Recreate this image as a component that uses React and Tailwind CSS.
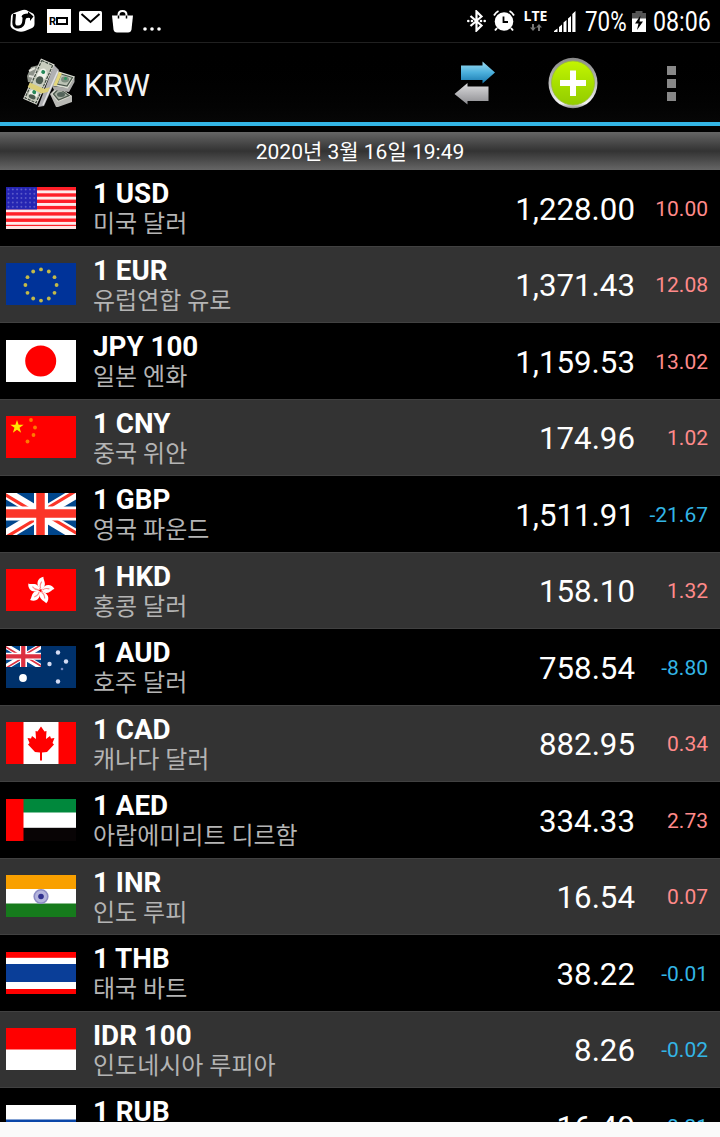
import React from 'react'
import clsx from 'clsx'

const STAR = 'M0 -1 L.23 -.31 L.95 -.31 L.36 .12 L.59 .81 L0 .38 L-.59 .81 L-.36 .12 L-.95 -.31 L-.23 -.31 Z'

function Star({ x, y, r, fill, rotate = 0 }) {
  return <path d={STAR} fill={fill} transform={`translate(${x} ${y}) rotate(${rotate}) scale(${r})`} />
}

function UnionJack({ red = '#fb3528' }) {
  return (
    <>
      <rect width="70" height="42" fill="#00468c" />
      <path d="M0 0 L70 42 M70 0 L0 42" stroke="#fff" strokeWidth="11" />
      <path d="M-1 1.5 L29 19.5 M71 40.5 L41 22.5 M69 -1.5 L39 16.5 M1 43.5 L31 25.5" stroke={red} strokeWidth="3.2" />
      <path d="M35 0 V42 M0 20.5 H70" stroke="#fff" strokeWidth="14" />
      <path d="M34.500 0 V42 M0 20.5 H70" stroke={red} strokeWidth="8.5" />
    </>
  )
}

const flags = {
  USD: (
    <>
      <rect width="70" height="42" fill="#ffeaea" />
      {[0, 1, 2, 3, 4, 5, 6].map((i) => (
        <rect key={i} y={i * 6.3} width="70" height="3.4" fill="#ff1f28" />
      ))}
      <rect y="39" width="70" height="3" fill="#ffe4e4" />
      <rect width="31" height="22.5" fill="#2525b2" />
      {Array.from({ length: 35 }, (_, i) => (
        <circle key={i} cx={2.5 + (i % 7) * 4.3} cy={2.5 + Math.floor(i / 7) * 4.3} r="1" fill="#5a5ac8" />
      ))}
    </>
  ),
  EUR: (
    <>
      <rect width="70" height="42" fill="#003399" />
      {Array.from({ length: 12 }, (_, i) => (
        <circle
          key={i}
          cx={35 + 15.6 * Math.sin((i * Math.PI) / 6)}
          cy={22 - 15.6 * Math.cos((i * Math.PI) / 6)}
          r="1.9"
          fill="#c4ba48"
        />
      ))}
    </>
  ),
  JPY: (
    <>
      <rect width="70" height="42" fill="#fff" />
      <circle cx="34.7" cy="21" r="15.5" fill="#f00" />
    </>
  ),
  CNY: (
    <>
      <rect width="70" height="42" fill="#f00" />
      <Star x={11} y={11} r={7} fill="#ffe600" />
      <circle cx="25" cy="4" r="1.9" fill="#ff7a00" />
      <circle cx="29" cy="11.500" r="1.9" fill="#ff7a00" />
      <circle cx="27.500" cy="19" r="1.9" fill="#ff7a00" />
      <circle cx="21.500" cy="25.500" r="1.9" fill="#ff7a00" />
    </>
  ),
  GBP: <UnionJack />,
  HKD: (
    <>
      <rect width="70" height="42" fill="#f00" />
      {[8, 80, 152, 224, 296].map((a) => (
        <g key={a} transform={`translate(34.5 21.5) rotate(${a})`}>
          <path d="M0 -1 C-6 -5 -5 -12 1 -14 C1 -11 5 -8 3 -4 C2 -2 1 -1 0 -1 Z" fill="#fff" />
          <path d="M0 -2 C-2 -5 -1 -7 0 -9" stroke="#ff8c8c" strokeWidth="1.2" fill="none" />
        </g>
      ))}
    </>
  ),
  AUD: (
    <>
      <rect width="70" height="42" fill="#00316b" />
      <svg width="35" height="21" viewBox="0 0 70 42" preserveAspectRatio="none">
        <UnionJack red="#dc3040" />
      </svg>
      <circle cx="17" cy="32" r="3.9" fill="#fff" />
      <circle cx="52" cy="6.500" r="2.200" fill="#d4dcf4" />
      <circle cx="43.500" cy="18" r="2.200" fill="#d4dcf4" />
      <circle cx="60" cy="15.500" r="2.200" fill="#d4dcf4" />
      <circle cx="56" cy="23" r="1.300" fill="#7688c0" />
      <circle cx="52" cy="35.500" r="2.200" fill="#d4dcf4" />
    </>
  ),
  CAD: (
    <>
      <rect width="70" height="42" fill="#fff" />
      <rect width="17.5" height="42" fill="#f00" />
      <rect x="52.5" width="17.5" height="42" fill="#f00" />
      <path
        d="M35 4.500 L38.500 9.500 L40.500 9 L40 17 L44 14 L45 16.500 L48.500 16 L46.500 21 L48 22.500 L41 30 L36 30.500 V38.500 H34 V30.500 L29 30 L22 22.500 L23.500 21 L21.500 16 L25 16.500 L26 14 L30 17 L29.500 9 L31.500 9.500 Z"
        fill="#f00"
      />
    </>
  ),
  AED: (
    <>
      <rect width="70" height="42" fill="#fff" />
      <rect width="70" height="13.5" fill="#00883c" />
      <rect y="28.8" width="70" height="13.2" fill="#080405" />
      <rect width="17.5" height="42" fill="#f00" />
    </>
  ),
  INR: (
    <>
      <rect width="70" height="42" fill="#fff" />
      <rect width="70" height="14" fill="#f9a000" />
      <rect y="28.5" width="70" height="13.5" fill="#167a1c" />
      <circle cx="35" cy="21.5" r="6.8" fill="#b4b4dc" stroke="#8c8cc4" strokeWidth="1.6" />
      <circle cx="35" cy="21.5" r="2.8" fill="#30308e" />
    </>
  ),
  THB: (
    <>
      <rect width="70" height="42" fill="#fff" />
      <rect width="70" height="5.8" fill="#f00" />
      <rect y="12" width="70" height="18" fill="#0a3e98" />
      <rect y="37" width="70" height="5" fill="#f00" />
    </>
  ),
  IDR: (
    <>
      <rect width="70" height="42" fill="#fff" />
      <rect width="70" height="21.5" fill="#f00" />
    </>
  ),
  RUB: (
    <>
      <rect width="70" height="42" fill="#fff" />
      <rect y="14.5" width="70" height="14" fill="#0a47a8" />
      <rect y="28.5" width="70" height="13.5" fill="#f00" />
    </>
  ),
}

const rates = [
  { code: 'USD', label: '1 USD', name: '미국 달러', value: '1,228.00', diff: '10.00' },
  { code: 'EUR', label: '1 EUR', name: '유럽연합 유로', value: '1,371.43', diff: '12.08' },
  { code: 'JPY', label: 'JPY 100', name: '일본 엔화', value: '1,159.53', diff: '13.02' },
  { code: 'CNY', label: '1 CNY', name: '중국 위안', value: '174.96', diff: '1.02' },
  { code: 'GBP', label: '1 GBP', name: '영국 파운드', value: '1,511.91', diff: '-21.67' },
  { code: 'HKD', label: '1 HKD', name: '홍콩 달러', value: '158.10', diff: '1.32' },
  { code: 'AUD', label: '1 AUD', name: '호주 달러', value: '758.54', diff: '-8.80' },
  { code: 'CAD', label: '1 CAD', name: '캐나다 달러', value: '882.95', diff: '0.34' },
  { code: 'AED', label: '1 AED', name: '아랍에미리트 디르함', value: '334.33', diff: '2.73' },
  { code: 'INR', label: '1 INR', name: '인도 루피', value: '16.54', diff: '0.07' },
  { code: 'THB', label: '1 THB', name: '태국 바트', value: '38.22', diff: '-0.01' },
  { code: 'IDR', label: 'IDR 100', name: '인도네시아 루피아', value: '8.26', diff: '-0.02' },
  { code: 'RUB', label: '1 RUB', value: '16.49', diff: '-0.21' },
]

function StatusBar() {
  return (
    <div className="flex h-[42px] shrink-0 items-center justify-between bg-black px-[9px] text-white">
      <div className="flex h-full items-center">
        {/* U+ logo */}
        <svg className="mr-3 h-6 w-[26px]" viewBox="0 0 26 24">
          <path d="M5 4 L12 1.5 Q16 0 19 2 L24 4.5 Q26 6 25.5 10 V15 Q25.5 18 22 19.5 L16 22 Q12 23.5 8 22 L4 20 Q1 18 1.5 15 L2 7 Q2 5 5 4 Z" fill="#fff" />
          <path d="M5.500 5 L4.800 13 Q4.500 18.500 9.500 18 Q14.500 17.500 14.800 12 L15.300 6" fill="none" stroke="#000" strokeWidth="3" />
          <path d="M12.500 7.500 Q13.500 4.500 19 4.500 V2.500 L24.500 7.500 L21 12 V9 Q17 8 16 11 Z" fill="#000" />
        </svg>
        <div className="mr-2 flex h-6 w-6 items-center bg-white pl-[2px]">
          <span className="font-[Roboto,sans-serif] text-[11px] leading-none font-bold text-black">R</span>
          <span className="h-2 w-3 shrink-0 border-2 border-black" />
        </div>
        <svg className="mr-[10px] h-5 w-[23px]" viewBox="0 0 23 20">
          <rect width="23" height="20" rx="1.5" fill="#fff" />
          <path d="M2.5 3 L11.5 11 L20.5 3" fill="none" stroke="#000" strokeWidth="2" />
        </svg>
        <svg className="mr-[10px] h-[23px] w-[21px]" viewBox="0 0 21 23">
          <path d="M0 5.5 H21 L19.5 19.5 Q19 22.5 16 22.5 H5 Q2 22.5 1.5 19.5 Z" fill="#fff" />
          <path d="M6.5 6 V5 Q6.5 1 10.5 1 Q14.5 1 14.5 5 V6" fill="none" stroke="#fff" strokeWidth="2" />
          <path d="M6.5 5.5 V8.500 M14.5 5.5 V8.500" stroke="#000" strokeWidth="1.5" />
        </svg>
        <svg className="mt-4 h-1 w-[18px]" viewBox="0 0 18 4">
          <circle cx="2" cy="2" r="1.8" fill="#fff" />
          <circle cx="9" cy="2" r="1.8" fill="#fff" />
          <circle cx="16" cy="2" r="1.8" fill="#fff" />
        </svg>
      </div>

      <div className="flex h-full items-center">
        <svg className="mr-[7px] h-[22px] w-[19px]" viewBox="0 0 19 22">
          <path d="M3.5 6 L14.5 15.5 L9.5 20.5 V1.5 L14.5 6.5 L3.5 16" fill="none" stroke="#fff" strokeWidth="2.200" />
          <circle cx="1.3" cy="11" r="1.3" fill="#fff" />
          <circle cx="5" cy="11" r="1.3" fill="#fff" />
          <circle cx="14" cy="11" r="1.3" fill="#fff" />
          <circle cx="17.7" cy="11" r="1.3" fill="#fff" />
        </svg>
        <svg className="mr-[9px] h-[22px] w-[22px]" viewBox="0 0 22 22">
          <circle cx="11" cy="11.5" r="9.300" fill="#fff" />
          <path d="M1 5.5 Q2.5 2.5 5.5 1 M21 5.5 Q19.500 2.5 16.5 1" fill="none" stroke="#fff" strokeWidth="1.8" />
          <path d="M4 18 L2 20.5 M18 18 L20 20.5" stroke="#fff" strokeWidth="2" />
          <path d="M10.5 6.500 V12 H15" fill="none" stroke="#000" strokeWidth="1.800" />
        </svg>
        <div className="mr-[7px] flex w-[23px] flex-col items-center">
          <span className="font-['Open_Sans',sans-serif] text-[14px] leading-[12px] font-bold">LTE</span>
          <svg className="mt-0.5 mb-0.5 h-[7px] w-3" viewBox="0 0 12 7">
            <path d="M2 0 H4 V3.5 H6 L3 7 L0 3.5 H2 Z M8 7 H10 V3.5 H12 L9 0 L6 3.5 H8 Z" fill="#777" />
          </svg>
        </div>
        <svg className="mr-[9px] h-[21px] w-[22px]" viewBox="0 0 22 21">
          <path d="M0 21 V20 L3.5 17.5 V21 Z M5 21 V16 L8 13.5 V21 Z M9.5 21 V11.5 L12.5 9 V21 Z M14 21 V7.5 L17 5 V21 Z M18.3 21 V3 L21.5 0 V21 Z" fill="#fff" />
        </svg>
        <div className="mr-[6px] w-[41px]">
          <span className="inline-block origin-left scale-x-[0.83] pt-px font-[Roboto,sans-serif] text-[27px] leading-[42px]">70%</span>
        </div>
        <svg className="mr-[7px] h-[21px] w-[14px]" viewBox="0 0 14 21">
          <path d="M3.5 0 H10.5 V2 H14 V21 H0 V2 H3.5 Z" fill="#555" />
          <rect y="7.5" width="14" height="13.5" fill="#fff" />
          <path d="M8.5 4.5 L3 12.5 H6.5 L5 19 L11 10.5 H7.5 Z" fill="#000" />
        </svg>
        <div className="w-[58px]">
          <span className="inline-block origin-left scale-x-[0.86] pt-px font-[Roboto,sans-serif] text-[27px] leading-[42px]">08:06</span>
        </div>
      </div>
    </div>
  )
}

function Bill({ w, h }) {
  return (
    <>
      <rect width={w} height={h} fill="#deded6" />
      <rect x="1.5" y="1.5" width={w - 3} height={h - 3} fill="#c9cdbf" stroke="#3f4a40" strokeWidth="1.2" strokeDasharray="3 1" />
      <ellipse cx={w / 2} cy={h / 2} rx={w * 0.3} ry={h * 0.24} fill="#f1f1e9" />
      <ellipse cx={w / 2} cy={h * 0.68} rx={w * 0.24} ry={h * 0.13} fill="#4c5b50" />
      <circle cx={w / 2} cy={h * 0.38} r="2" fill="#27895a" />
    </>
  )
}

function MoneyIcon() {
  return (
    <svg className="h-[50px] w-[53px]" viewBox="0 0 53 50">
      {/* stack behind on the left */}
      <path d="M4 18 L8 9 L16 7 L14 25 L5 24 Z" fill="#8e938a" />
      <path d="M6 13 L12 10 M6 18 L11 19" stroke="#e4e4dc" strokeWidth="2" />
      {/* right stacks */}
      <path d="M27 36 L34 29 L49 38 L49 44 L35 49 L33 49 Z" fill="#b9b9b5" />
      <path d="M28 36 L35 28.500 L49 38 L35 44 Z" fill="#d6d8cd" />
      <path d="M30.500 36 L36 30.500 L46 37.500 L35.500 42 Z" fill="#a9b1a4" stroke="#48554a" strokeWidth="1.200" />
      <ellipse cx="38" cy="36.500" rx="4" ry="2.500" fill="#53635a" />
      <path d="M29 28 L45 30 L51.500 19 V24 L46 34 L31 32 Z" fill="#aaaaa8" />
      <path d="M36 13.500 L52 18.500 L45 30.500 L29 27.500 Z" fill="#dde0d5" />
      <path d="M38 16 L49.500 19.500 L44 28 L34 26 Z" fill="#bcc3b5" stroke="#48554a" strokeWidth="1.200" />
      <ellipse cx="42" cy="21.500" rx="4" ry="3" fill="#7c8d7f" />
      <circle cx="42.500" cy="20.500" r="1.500" fill="#2f9a60" />
      <path d="M35 14 L39 15.500 L33.500 28 L29 27 Z" fill="#e4d77e" />
      {/* front stack */}
      <path d="M31 7 L36 12 L34 19 L21 48 L15 49 Z" fill="#b0b0b3" />
      <path d="M35 13 L20 47" fill="none" stroke="#e2e2e2" strokeWidth="1.5" />
      <g transform="translate(18 0.500) rotate(24)">
        <Bill w={15} h={30} />
        <g transform="translate(0 27)">
          <Bill w={15} h={17} />
        </g>
        <path d="M-0.500 26.500 H15 L20 22.500 V27.500 L15 31.500 H-0.500 Z" fill="#dccf78" />
      </g>
    </svg>
  )
}

function SwapIcon() {
  return (
    <svg className="h-[44px] w-[42px]" viewBox="0 0 42 44">
      <defs>
        <linearGradient id="blueArrow" x1="0" y1="0" x2="0" y2="1">
          <stop offset="0" stopColor="#9bdcf2" />
          <stop offset="0.5" stopColor="#4cb0dc" />
          <stop offset="1" stopColor="#1878ae" />
        </linearGradient>
        <linearGradient id="grayArrow" x1="0" y1="0" x2="0" y2="1">
          <stop offset="0" stopColor="#dedee0" />
          <stop offset="1" stopColor="#8c8c90" />
        </linearGradient>
      </defs>
      <path d="M7 4.5 H28.5 V0.5 L41 11.5 L28.5 22.5 V19 H7 Z" fill="url(#blueArrow)" />
      <path d="M34.5 25.5 H13.5 V22 L0.5 33 L13.5 43.5 V40 H34.5 Z" fill="url(#grayArrow)" />
    </svg>
  )
}

function AddIcon() {
  return (
    <svg className="h-[52px] w-[50px]" viewBox="0 0 50 52">
      <defs>
        <linearGradient id="ring" x1="0" y1="0" x2="0" y2="1">
          <stop offset="0" stopColor="#888" />
          <stop offset="0.5" stopColor="#bbb" />
          <stop offset="0.9" stopColor="#f4f4f4" />
          <stop offset="1" stopColor="#888" />
        </linearGradient>
        <linearGradient id="lime" x1="0" y1="0" x2="0" y2="1">
          <stop offset="0" stopColor="#c4f500" />
          <stop offset="0.5" stopColor="#a8e000" />
          <stop offset="1" stopColor="#93cc00" />
        </linearGradient>
      </defs>
      <ellipse cx="25" cy="26" rx="24.5" ry="25.3" fill="url(#ring)" />
      <ellipse cx="25" cy="26" rx="21.500" ry="22" fill="url(#lime)" stroke="#98bd35" strokeWidth="0.8" />
      <path d="M22 13.500 H28 V23 H38 V29 H28 V39 H22 V29 H12 V23 H22 Z" fill="#fff" />
    </svg>
  )
}

function ActionBar() {
  return (
    <header className="flex h-[84px] shrink-0 items-center border-t border-b-4 border-t-[#202020] border-b-[#33b5e5] bg-gradient-to-b from-black to-[#060606] pt-px pr-[44px] pl-[23px]">
      <MoneyIcon />
      <h1 className="ml-[8px] flex-1 pt-1 font-[Roboto,sans-serif] text-[31px] leading-none text-[#f3f3f3]">KRW</h1>
      <button type="button" className="mr-[52px]">
        <SwapIcon />
      </button>
      <button type="button" className="mr-[69px]">
        <AddIcon />
      </button>
      <button type="button" className="flex flex-col gap-1">
        <span className="h-[9px] w-[9px] bg-[#888]" />
        <span className="h-[9px] w-[9px] bg-[#888]" />
        <span className="h-[9px] w-[9px] bg-[#888]" />
      </button>
    </header>
  )
}

function RateRow({ rate, index }) {
  const down = rate.diff.startsWith('-')
  return (
    <li
      className={clsx(
        'flex h-[76.5px] shrink-0 items-center border-b border-[#414141] pr-3 pl-1.5',
        index % 2 ? 'bg-[#333]' : 'bg-black'
      )}
    >
      <svg className="h-[42px] w-[70px] shrink-0" viewBox="0 0 70 42" preserveAspectRatio="none">
        {flags[rate.code]}
      </svg>
      <div className="ml-[17px] flex-1 pt-0.5">
        <div className="text-[27.75px] leading-[31px] font-bold text-white">{rate.label}</div>
        <div className="h-[30px] text-[24px] leading-[30px] text-[#b4b4b4]">{rate.name}</div>
      </div>
      <div className="pt-[3px] text-[31.25px] leading-none text-white">{rate.value}</div>
      <div className={clsx('w-[73px] pt-[3px] text-right text-[21px] leading-none', down ? 'text-[#33b5e5]' : 'text-[#ff8a8a]')}>
        {rate.diff}
      </div>
    </li>
  )
}

export default function App() {
  return (
    <div className="h-[1137px] w-[720px] overflow-hidden bg-[#fafafa] font-[Roboto,'Noto_Sans_CJK_KR',sans-serif]">
      <div className="flex h-[1122px] flex-col overflow-hidden bg-black">
        <StatusBar />
        <ActionBar />
        <div className="mt-1.5 flex h-[38px] shrink-0 items-center justify-center bg-gradient-to-b from-[#666] via-[#333] to-[#666] pt-0.5 text-[21px] leading-none text-white">
          2020년 3월 16일 19:49
        </div>
        <ul className="flex flex-col">
          {rates.map((rate, i) => (
            <RateRow key={rate.code} rate={rate} index={i} />
          ))}
        </ul>
      </div>
    </div>
  )
}
